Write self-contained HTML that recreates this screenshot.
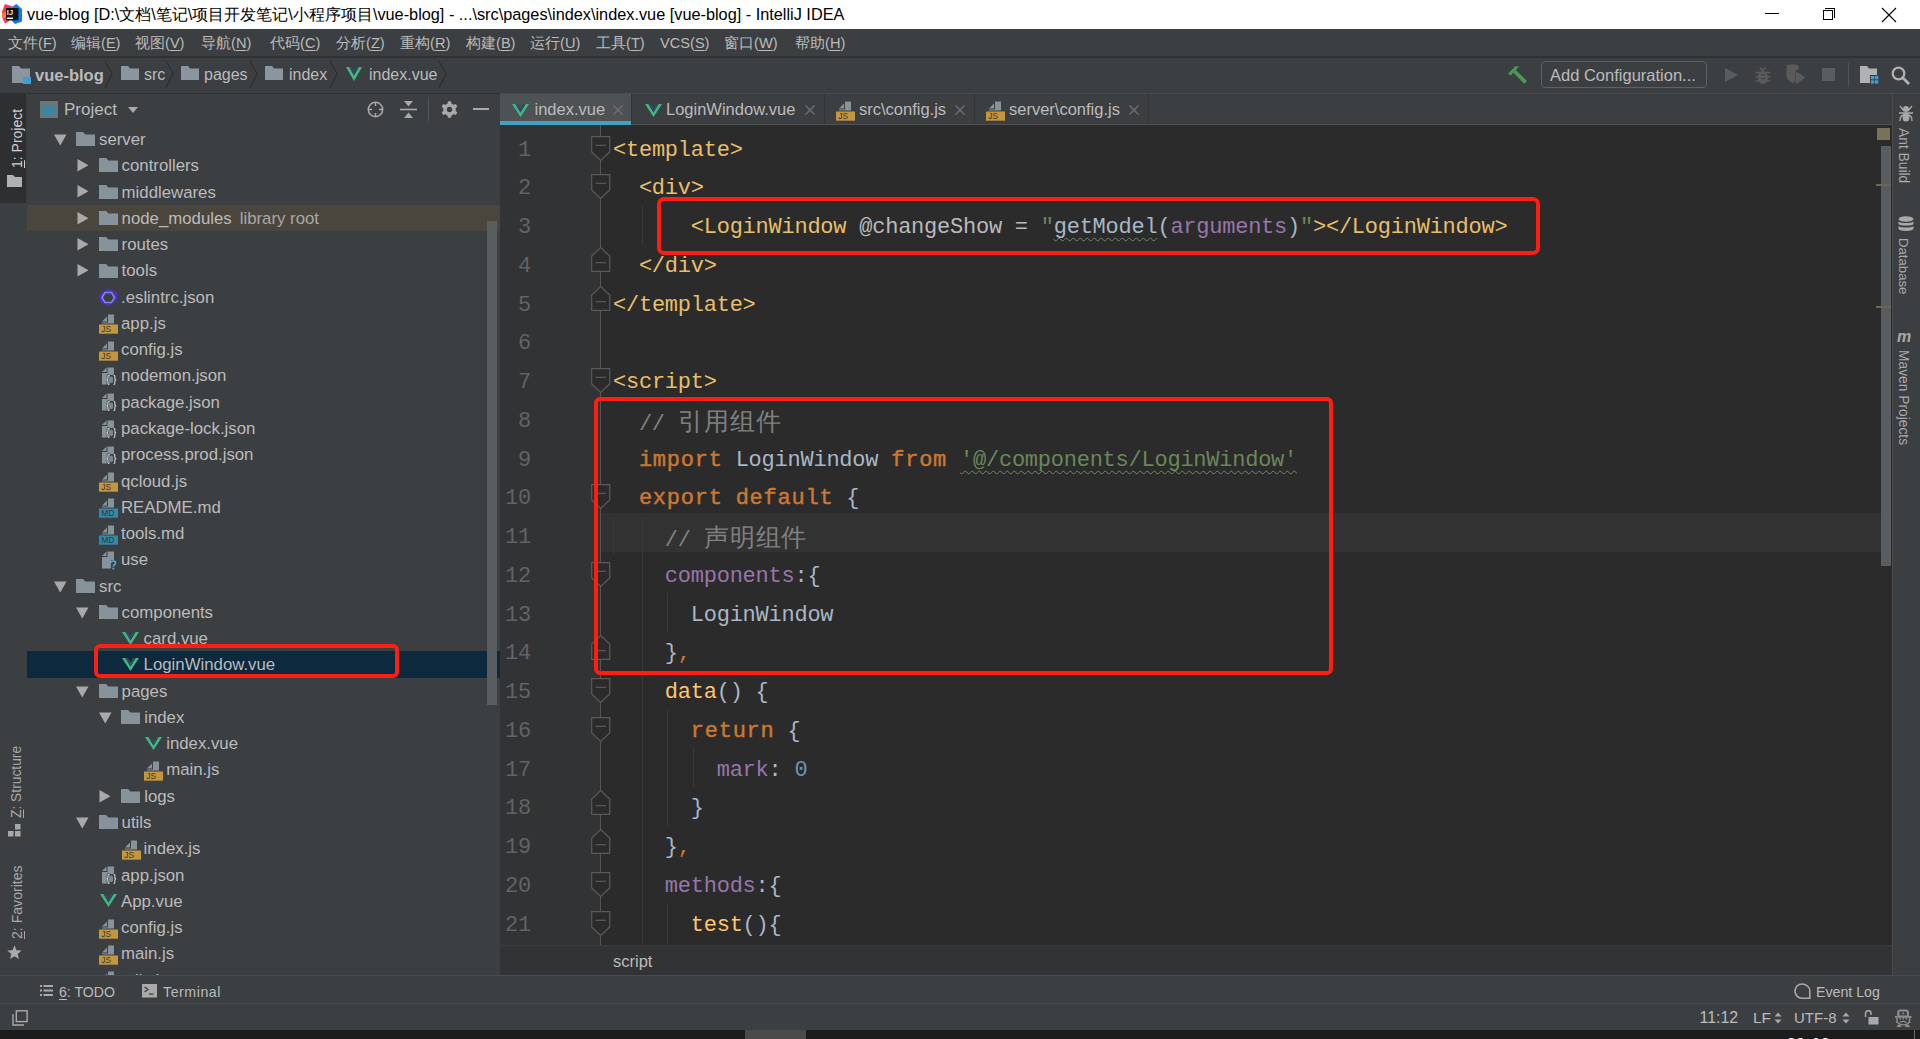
<!DOCTYPE html>
<html><head><meta charset="utf-8">
<style>
*{margin:0;padding:0;box-sizing:border-box}
html,body{width:1920px;height:1039px;overflow:hidden;background:#3C3F41;font-family:"Liberation Sans",sans-serif;color:#BBBBBB}
.a{position:absolute}
.t{position:absolute;white-space:pre;line-height:1}
#title{left:0;top:0;width:1920px;height:29px;background:#fff}
#menu{left:0;top:29px;width:1920px;height:28px;background:#3C3F41;border-bottom:1px solid #2F3133}
#nav{left:0;top:57px;width:1920px;height:37px;background:#3C3F41;border-bottom:1px solid #2F3133}
#lstrip{left:0;top:93px;width:27px;height:882px;background:#3C3F41;border-right:1px solid #474849}
#proj{left:26px;top:93px;width:474px;height:882px;background:#3C3F41}
#tabs{left:500px;top:93px;width:1393px;height:32px;background:#3C3F41;border-bottom:1px solid #515151}
#gutter{left:500px;top:125px;width:101px;height:820px;background:#313335}
#code{left:601px;top:125px;width:1291px;height:820px;background:#2B2B2B}
#rstrip{left:1892px;top:93px;width:28px;height:882px;background:#3C3F41;border-left:1px solid #4B4B4B}
#crumb{left:500px;top:945px;width:1392px;height:30px;background:#313335;border-top:1px solid #3A3A3A}
#tw{left:0;top:975px;width:1920px;height:28px;background:#3C3F41;border-top:1px solid #4A4B4C}
#status{left:0;top:1003px;width:1920px;height:27px;background:#3C3F41;border-top:1px solid #4A4B4C}
#task{left:0;top:1030px;width:1920px;height:9px;background:#1C1C1C}
.mi{top:6.5px;font-size:14.6px;color:#BBBBBB}
u{text-decoration:underline;text-underline-offset:2px}
.row{position:absolute;height:26px;font-size:17px;line-height:26px;white-space:pre;color:#BBBBBB}
.ln{font-family:"Liberation Mono",monospace;font-size:22px;color:#606366;letter-spacing:-0.24px}
.code{font-family:"Liberation Mono",monospace;font-size:22px;letter-spacing:-0.24px;color:#A9B7C6}
.tg{color:#E8BF6A}.kw{color:#CC7832}.st{color:#6A8759}.cm{color:#808080}.pu{color:#9876AA}.nu{color:#6897BB}.df{color:#A9B7C6}
</style></head><body>

<div id="title" class="a">
 <svg class="a" style="left:0;top:0" width="24" height="26" viewBox="0 0 24 26">
  <path d="M5 4L12.5 6.5V19L5 23.5L2 17V11.5Z" fill="#FE315D"/>
  <path d="M2 12.5H6V18H2.3Z" fill="#FC801D"/>
  <path d="M16.3 4L22 9V21.5L15 24L11.5 20.5L12.5 6.5Z" fill="#087CFA"/>
  <rect x="6" y="8" width="12.5" height="12.3" fill="#111"/>
  <text x="6.8" y="15" font-family="Liberation Sans" font-weight="bold" font-size="7.5" fill="#E8E8E8">IJ</text>
  <rect x="7" y="17.6" width="6" height="1.4" fill="#fff"/>
 </svg>
 <div class="t" style="left:27px;top:6px;font-size:16.3px;color:#000">vue-blog [D:\文档\笔记\项目开发笔记\小程序项目\vue-blog] - ...\src\pages\index\index.vue [vue-blog] - IntelliJ IDEA</div>
 <div class="a" style="left:1765px;top:13px;width:14px;height:1px;background:#000"></div>
 <div class="a" style="left:1823px;top:10px;width:10px;height:10px;border:1px solid #000"></div>
 <div class="a" style="left:1825px;top:8px;width:10px;height:10px;border-top:1px solid #000;border-right:1px solid #000"></div>
 <svg class="a" style="left:1881px;top:7px" width="16" height="16" viewBox="0 0 16 16"><path d="M1 1L15 15M15 1L1 15" stroke="#000" stroke-width="1.1"/></svg>
</div>

<div id="menu" class="a">
 <div class="t mi" style="left:8px">文件(<u>F</u>)</div>
 <div class="t mi" style="left:71px">编辑(<u>E</u>)</div>
 <div class="t mi" style="left:135px">视图(<u>V</u>)</div>
 <div class="t mi" style="left:201px">导航(<u>N</u>)</div>
 <div class="t mi" style="left:270px">代码(<u>C</u>)</div>
 <div class="t mi" style="left:336px">分析(<u>Z</u>)</div>
 <div class="t mi" style="left:400px">重构(<u>R</u>)</div>
 <div class="t mi" style="left:466px">构建(<u>B</u>)</div>
 <div class="t mi" style="left:530px">运行(<u>U</u>)</div>
 <div class="t mi" style="left:596px">工具(<u>T</u>)</div>
 <div class="t mi" style="left:660px">VCS(<u>S</u>)</div>
 <div class="t mi" style="left:724px">窗口(<u>W</u>)</div>
 <div class="t mi" style="left:795px">帮助(<u>H</u>)</div>
</div>

<div id="nav" class="a">
<svg class="a" style="left:12px;top:9px" width="20" height="18" viewBox="0 0 20 18"><path d="M0 0H7L9 2.5H18V11H11V17H0Z" fill="#8A959F"/><rect x="11" y="11" width="8" height="7" fill="#3D9FD8"/></svg><div class="t" style="left:35px;top:10.4px;font-size:16.5px;font-weight:bold;color:#BBBBBB">vue-blog</div><svg class="a" style="left:104px;top:4px" width="10" height="27" viewBox="0 0 10 27"><path d="M1 0L8.3 12.5L1 26.5" fill="none" stroke="#2A2C2D" stroke-width="1.1"/><path d="M2.2 0L9.5 12.5" fill="none" stroke="#45484A" stroke-width="0.7"/></svg><svg class="a" style="left:121px;top:9px" width="18" height="14" viewBox="0 0 18 14"><path d="M0 0H7L9 2.5H18V14H0Z" fill="#8A959F"/></svg><div class="t" style="left:144px;top:10.4px;font-size:16px">src</div><svg class="a" style="left:165px;top:4px" width="10" height="27" viewBox="0 0 10 27"><path d="M1 0L8.3 12.5L1 26.5" fill="none" stroke="#2A2C2D" stroke-width="1.1"/><path d="M2.2 0L9.5 12.5" fill="none" stroke="#45484A" stroke-width="0.7"/></svg><svg class="a" style="left:181px;top:9px" width="18" height="14" viewBox="0 0 18 14"><path d="M0 0H7L9 2.5H18V14H0Z" fill="#8A959F"/></svg><div class="t" style="left:204px;top:10.4px;font-size:16px">pages</div><svg class="a" style="left:249px;top:4px" width="10" height="27" viewBox="0 0 10 27"><path d="M1 0L8.3 12.5L1 26.5" fill="none" stroke="#2A2C2D" stroke-width="1.1"/><path d="M2.2 0L9.5 12.5" fill="none" stroke="#45484A" stroke-width="0.7"/></svg><svg class="a" style="left:265px;top:9px" width="18" height="14" viewBox="0 0 18 14"><path d="M0 0H7L9 2.5H18V14H0Z" fill="#8A959F"/></svg><div class="t" style="left:289px;top:10.4px;font-size:16px">index</div><svg class="a" style="left:329px;top:4px" width="10" height="27" viewBox="0 0 10 27"><path d="M1 0L8.3 12.5L1 26.5" fill="none" stroke="#2A2C2D" stroke-width="1.1"/><path d="M2.2 0L9.5 12.5" fill="none" stroke="#45484A" stroke-width="0.7"/></svg><svg class="a" style="left:346px;top:9.5px" width="16" height="14" viewBox="0 0 16 14"><path d="M0 0H3.2L8 8.6L12.8 0H16L8 14Z" fill="#41B883"/><path d="M3.2 0H5.6L8 4.3L10.4 0H12.8L8 8.6Z" fill="#35495E"/></svg><div class="t" style="left:369px;top:10.4px;font-size:16px">index.vue</div><svg class="a" style="left:438px;top:4px" width="10" height="27" viewBox="0 0 10 27"><path d="M1 0L8.3 12.5L1 26.5" fill="none" stroke="#2A2C2D" stroke-width="1.1"/><path d="M2.2 0L9.5 12.5" fill="none" stroke="#45484A" stroke-width="0.7"/></svg><svg class="a" style="left:1500px;top:3px" width="40" height="30" viewBox="0 0 40 30"><path d="M8.2 13.6L15.4 6.2H19.2L15.6 10.2L13.4 12.4L10.6 15.6Z" fill="#499C54"/><path d="M13.2 12.6L15.8 10L27 21L24.2 23.8Z" fill="#499C54"/></svg><div class="a" style="left:1541px;top:4px;width:166px;height:27px;border:1px solid #5E6162;border-radius:4px"></div><div class="t" style="left:1550px;top:10px;font-size:16.5px;color:#BBBBBB">Add Configuration...</div><svg class="a" style="left:1725px;top:11px" width="13" height="14" viewBox="0 0 13 14"><path d="M0 0L13 7L0 14Z" fill="#5A5D5F"/></svg><svg class="a" style="left:1745px;top:3px" width="30" height="30" viewBox="0 0 30 30"><ellipse cx="17.9" cy="17.5" rx="5" ry="6.6" fill="#5A5A5A"/><path d="M15 7.5L17.5 10.5L20.5 7.5" fill="none" stroke="#5A5A5A" stroke-width="1.6"/><path d="M10.5 12.5H25.5M10.5 16.8H25.5M10.5 21H25.5" stroke="#5A5A5A" stroke-width="1.6"/><path d="M16 14.7H20M16 18.5H20" stroke="#3C3F41" stroke-width="1.1"/></svg><svg class="a" style="left:1785px;top:3px" width="25" height="30" viewBox="0 0 25 30"><path d="M1.5 5.5L7.5 4L13.5 5.5V10H10.5V21.5L7.5 23L3 20C1.5 18.5 1.5 17 1.5 15Z" fill="#5A5A5A"/><path d="M11 11.3L20.5 17.5L11 24.2Z" fill="#5A5A5A"/></svg><div class="a" style="left:1822px;top:11px;width:13px;height:13px;background:#5A5D5F"></div><div class="a" style="left:1848px;top:6px;width:1px;height:24px;background:#515456"></div><svg class="a" style="left:1860px;top:9px" width="19" height="18" viewBox="0 0 19 18"><path d="M0 0H7L9 2.5H17V9H10V17H0Z" fill="#AFB1B3"/><rect x="11" y="10" width="3.3" height="3.3" fill="#3D9FD8"/><rect x="15" y="10" width="3.3" height="3.3" fill="#3D9FD8"/><rect x="11" y="14.3" width="3.3" height="3.3" fill="#3D9FD8"/><rect x="15" y="14.3" width="3.3" height="3.3" fill="#3D9FD8"/></svg><svg class="a" style="left:1891px;top:9px" width="20" height="19" viewBox="0 0 20 19"><circle cx="7.5" cy="7.5" r="5.8" fill="none" stroke="#AFB1B3" stroke-width="2.2"/><path d="M11.5 11.5L18 18" stroke="#AFB1B3" stroke-width="2.8"/></svg></div>

<div id="lstrip" class="a"></div>
<div id="proj" class="a"></div>
<div class="a" style="left:0;top:93px;width:26px;height:110px;background:#2D2F30"></div>
<div class="t" style="left:9.8px;top:168px;font-size:14px;color:#D0D0D0;transform:rotate(-90deg);transform-origin:0 0"><u>1</u>: Project</div>
<svg class="a" style="left:7px;top:175px" width="15" height="12" viewBox="0 0 15 12"><path d="M0 0H6L8 2H15V12H0Z" fill="#AFB1B3"/></svg>
<svg class="a" style="left:40px;top:101px" width="18" height="17" viewBox="0 0 18 17"><rect x="0" y="0" width="18" height="17" fill="#6E7375"/><rect x="2" y="4" width="14" height="11" fill="#3E86A0"/></svg>
<div class="t" style="left:64px;top:101px;font-size:17px;color:#BBBBBB">Project</div>
<svg class="a" style="left:128px;top:107px" width="10" height="6" viewBox="0 0 10 6"><path d="M0 0H10L5 6Z" fill="#A9A9A9"/></svg>
<svg class="a" style="left:366.5px;top:101px" width="17" height="17" viewBox="0 0 17 17"><circle cx="8.5" cy="8.5" r="7.2" fill="none" stroke="#A9A9A9" stroke-width="1.5"/><path d="M8.5 1.3V5M8.5 12V15.7M1.3 8.5H5M12 8.5H15.7" stroke="#A9A9A9" stroke-width="1.5"/></svg>
<svg class="a" style="left:400px;top:101px" width="17" height="17" viewBox="0 0 17 17"><path d="M0 8.5H17" stroke="#A9A9A9" stroke-width="1.6"/><path d="M4 0H13L8.5 5.5Z M4 17H13L8.5 11.5Z" fill="#A9A9A9"/></svg>
<div class="a" style="left:428px;top:97px;width:1px;height:24px;background:#515456"></div>
<svg class="a" style="left:440.5px;top:101px" width="17" height="17" viewBox="0 0 17 17"><g fill="#A9A9A9"><circle cx="8.5" cy="8.5" r="6.3"/><rect x="6.7" y="0.3" width="3.6" height="16.4" rx="0.8"/><rect x="6.7" y="0.3" width="3.6" height="16.4" rx="0.8" transform="rotate(60 8.5 8.5)"/><rect x="6.7" y="0.3" width="3.6" height="16.4" rx="0.8" transform="rotate(120 8.5 8.5)"/></g><circle cx="8.5" cy="8.5" r="2.7" fill="#3C3F41"/></svg>
<div class="a" style="left:473px;top:108px;width:16px;height:2px;background:#A9A9A9"></div>
<div class="a" style="left:27px;top:0;width:473px;height:975px;overflow:hidden">
<svg class="a" style="left:26.5px;top:133.9px" width="13" height="12" viewBox="0 0 13 12"><path d="M0 0.5H12.5L6.25 11.5Z" fill="#A9A9A9"/></svg>
<svg class="a" style="left:49.0px;top:132.1px" width="19" height="14" viewBox="0 0 19 14"><path d="M0 0H7L9.5 2.6H19V14H0Z" fill="#87939A"/></svg>
<div class="t" style="left:72.0px;top:132.00px;font-size:16.8px;color:#BBBBBB">server</div>
<svg class="a" style="left:49.6px;top:159.2px" width="12" height="13" viewBox="0 0 12 13"><path d="M0.5 0L11.5 6.25L0.5 12.5Z" fill="#A9A9A9"/></svg>
<svg class="a" style="left:71.6px;top:158.4px" width="19" height="14" viewBox="0 0 19 14"><path d="M0 0H7L9.5 2.6H19V14H0Z" fill="#87939A"/></svg>
<div class="t" style="left:94.6px;top:158.27px;font-size:16.8px;color:#BBBBBB">controllers</div>
<svg class="a" style="left:49.6px;top:185.4px" width="12" height="13" viewBox="0 0 12 13"><path d="M0.5 0L11.5 6.25L0.5 12.5Z" fill="#A9A9A9"/></svg>
<svg class="a" style="left:71.6px;top:184.6px" width="19" height="14" viewBox="0 0 19 14"><path d="M0 0H7L9.5 2.6H19V14H0Z" fill="#87939A"/></svg>
<div class="t" style="left:94.6px;top:184.54px;font-size:16.8px;color:#BBBBBB">middlewares</div>
<div class="a" style="left:0;top:204.71px;width:473px;height:26px;background:#4A463D"></div>
<svg class="a" style="left:49.6px;top:211.7px" width="12" height="13" viewBox="0 0 12 13"><path d="M0.5 0L11.5 6.25L0.5 12.5Z" fill="#A9A9A9"/></svg>
<svg class="a" style="left:71.6px;top:210.9px" width="19" height="14" viewBox="0 0 19 14"><path d="M0 0H7L9.5 2.6H19V14H0Z" fill="#87939A"/></svg>
<div class="t" style="left:94.6px;top:210.81px;font-size:16.8px;color:#BBBBBB">node_modules<span style="color:#A8A8A8;margin-left:8px">library root</span></div>
<svg class="a" style="left:49.6px;top:238.0px" width="12" height="13" viewBox="0 0 12 13"><path d="M0.5 0L11.5 6.25L0.5 12.5Z" fill="#A9A9A9"/></svg>
<svg class="a" style="left:71.6px;top:237.2px" width="19" height="14" viewBox="0 0 19 14"><path d="M0 0H7L9.5 2.6H19V14H0Z" fill="#87939A"/></svg>
<div class="t" style="left:94.6px;top:237.08px;font-size:16.8px;color:#BBBBBB">routes</div>
<svg class="a" style="left:49.6px;top:264.3px" width="12" height="13" viewBox="0 0 12 13"><path d="M0.5 0L11.5 6.25L0.5 12.5Z" fill="#A9A9A9"/></svg>
<svg class="a" style="left:71.6px;top:263.5px" width="19" height="14" viewBox="0 0 19 14"><path d="M0 0H7L9.5 2.6H19V14H0Z" fill="#87939A"/></svg>
<div class="t" style="left:94.6px;top:263.35px;font-size:16.8px;color:#BBBBBB">tools</div>
<svg class="a" style="left:72.0px;top:287.5px" width="19" height="19" viewBox="0 0 19 19"><path d="M10 0.5L17.5 4L18 12.5L8.5 18L1 13.5L0.5 6Z" fill="#4B32C3"/><path d="M6 4.5H12.5L15.5 9.5L12.5 14.5H6L3 9.5Z" fill="#3C3F41" stroke="#8080F2" stroke-width="1.6"/></svg>
<div class="t" style="left:94.0px;top:289.62px;font-size:16.8px;color:#BBBBBB">.eslintrc.json</div>
<svg class="a" style="left:72.0px;top:314.4px" width="19" height="20" viewBox="0 0 19 20"><path d="M3 7.5L8 2.5V7.5Z" fill="#87939A"/><path d="M9 0.5H15V9.5H3V8.5H9Z" fill="#87939A"/><rect x="0" y="10.5" width="19" height="9.2" fill="#C4963F"/><text x="2.2" y="18.4" font-family="Liberation Sans" font-size="8.4" fill="#3A3A30">JS</text></svg>
<div class="t" style="left:94.0px;top:315.89px;font-size:16.8px;color:#BBBBBB">app.js</div>
<svg class="a" style="left:72.0px;top:340.7px" width="19" height="20" viewBox="0 0 19 20"><path d="M3 7.5L8 2.5V7.5Z" fill="#87939A"/><path d="M9 0.5H15V9.5H3V8.5H9Z" fill="#87939A"/><rect x="0" y="10.5" width="19" height="9.2" fill="#C4963F"/><text x="2.2" y="18.4" font-family="Liberation Sans" font-size="8.4" fill="#3A3A30">JS</text></svg>
<div class="t" style="left:94.0px;top:342.16px;font-size:16.8px;color:#BBBBBB">config.js</div>
<svg class="a" style="left:72.0px;top:366.9px" width="19" height="20" viewBox="0 0 19 20"><path d="M3 5L7.5 0.5V5Z" fill="#87939A"/><path d="M8.5 0.5H15V8H11V17.5H3V6H8.5Z" fill="#87939A"/><path d="M10.2 8.2C8.6 8.2 9 9.6 9 11C9 12.2 8.6 12.8 7.6 12.8C8.6 12.8 9 13.4 9 14.6C9 16 8.6 17.6 10.2 17.6M14.6 8.2C16.2 8.2 15.8 9.6 15.8 11C15.8 12.2 16.2 12.8 17.2 12.8C16.2 12.8 15.8 13.4 15.8 14.6C15.8 16 16.2 17.6 14.6 17.6" fill="none" stroke="#3C3F41" stroke-width="2.6"/><ellipse cx="12.4" cy="12.9" rx="1.7" ry="3.3" fill="#7E878D"/><path d="M10.2 8.2C8.6 8.2 9 9.6 9 11C9 12.2 8.6 12.8 7.6 12.8C8.6 12.8 9 13.4 9 14.6C9 16 8.6 17.6 10.2 17.6M14.6 8.2C16.2 8.2 15.8 9.6 15.8 11C15.8 12.2 16.2 12.8 17.2 12.8C16.2 12.8 15.8 13.4 15.8 14.6C15.8 16 16.2 17.6 14.6 17.6" fill="none" stroke="#D8D8D8" stroke-width="1.1"/></svg>
<div class="t" style="left:94.0px;top:368.43px;font-size:16.8px;color:#BBBBBB">nodemon.json</div>
<svg class="a" style="left:72.0px;top:393.2px" width="19" height="20" viewBox="0 0 19 20"><path d="M3 5L7.5 0.5V5Z" fill="#87939A"/><path d="M8.5 0.5H15V8H11V17.5H3V6H8.5Z" fill="#87939A"/><path d="M10.2 8.2C8.6 8.2 9 9.6 9 11C9 12.2 8.6 12.8 7.6 12.8C8.6 12.8 9 13.4 9 14.6C9 16 8.6 17.6 10.2 17.6M14.6 8.2C16.2 8.2 15.8 9.6 15.8 11C15.8 12.2 16.2 12.8 17.2 12.8C16.2 12.8 15.8 13.4 15.8 14.6C15.8 16 16.2 17.6 14.6 17.6" fill="none" stroke="#3C3F41" stroke-width="2.6"/><ellipse cx="12.4" cy="12.9" rx="1.7" ry="3.3" fill="#7E878D"/><path d="M10.2 8.2C8.6 8.2 9 9.6 9 11C9 12.2 8.6 12.8 7.6 12.8C8.6 12.8 9 13.4 9 14.6C9 16 8.6 17.6 10.2 17.6M14.6 8.2C16.2 8.2 15.8 9.6 15.8 11C15.8 12.2 16.2 12.8 17.2 12.8C16.2 12.8 15.8 13.4 15.8 14.6C15.8 16 16.2 17.6 14.6 17.6" fill="none" stroke="#D8D8D8" stroke-width="1.1"/></svg>
<div class="t" style="left:94.0px;top:394.70px;font-size:16.8px;color:#BBBBBB">package.json</div>
<svg class="a" style="left:72.0px;top:419.5px" width="19" height="20" viewBox="0 0 19 20"><path d="M3 5L7.5 0.5V5Z" fill="#87939A"/><path d="M8.5 0.5H15V8H11V17.5H3V6H8.5Z" fill="#87939A"/><path d="M10.2 8.2C8.6 8.2 9 9.6 9 11C9 12.2 8.6 12.8 7.6 12.8C8.6 12.8 9 13.4 9 14.6C9 16 8.6 17.6 10.2 17.6M14.6 8.2C16.2 8.2 15.8 9.6 15.8 11C15.8 12.2 16.2 12.8 17.2 12.8C16.2 12.8 15.8 13.4 15.8 14.6C15.8 16 16.2 17.6 14.6 17.6" fill="none" stroke="#3C3F41" stroke-width="2.6"/><ellipse cx="12.4" cy="12.9" rx="1.7" ry="3.3" fill="#7E878D"/><path d="M10.2 8.2C8.6 8.2 9 9.6 9 11C9 12.2 8.6 12.8 7.6 12.8C8.6 12.8 9 13.4 9 14.6C9 16 8.6 17.6 10.2 17.6M14.6 8.2C16.2 8.2 15.8 9.6 15.8 11C15.8 12.2 16.2 12.8 17.2 12.8C16.2 12.8 15.8 13.4 15.8 14.6C15.8 16 16.2 17.6 14.6 17.6" fill="none" stroke="#D8D8D8" stroke-width="1.1"/></svg>
<div class="t" style="left:94.0px;top:420.97px;font-size:16.8px;color:#BBBBBB">package-lock.json</div>
<svg class="a" style="left:72.0px;top:445.7px" width="19" height="20" viewBox="0 0 19 20"><path d="M3 5L7.5 0.5V5Z" fill="#87939A"/><path d="M8.5 0.5H15V8H11V17.5H3V6H8.5Z" fill="#87939A"/><path d="M10.2 8.2C8.6 8.2 9 9.6 9 11C9 12.2 8.6 12.8 7.6 12.8C8.6 12.8 9 13.4 9 14.6C9 16 8.6 17.6 10.2 17.6M14.6 8.2C16.2 8.2 15.8 9.6 15.8 11C15.8 12.2 16.2 12.8 17.2 12.8C16.2 12.8 15.8 13.4 15.8 14.6C15.8 16 16.2 17.6 14.6 17.6" fill="none" stroke="#3C3F41" stroke-width="2.6"/><ellipse cx="12.4" cy="12.9" rx="1.7" ry="3.3" fill="#7E878D"/><path d="M10.2 8.2C8.6 8.2 9 9.6 9 11C9 12.2 8.6 12.8 7.6 12.8C8.6 12.8 9 13.4 9 14.6C9 16 8.6 17.6 10.2 17.6M14.6 8.2C16.2 8.2 15.8 9.6 15.8 11C15.8 12.2 16.2 12.8 17.2 12.8C16.2 12.8 15.8 13.4 15.8 14.6C15.8 16 16.2 17.6 14.6 17.6" fill="none" stroke="#D8D8D8" stroke-width="1.1"/></svg>
<div class="t" style="left:94.0px;top:447.24px;font-size:16.8px;color:#BBBBBB">process.prod.json</div>
<svg class="a" style="left:72.0px;top:472.0px" width="19" height="20" viewBox="0 0 19 20"><path d="M3 7.5L8 2.5V7.5Z" fill="#87939A"/><path d="M9 0.5H15V9.5H3V8.5H9Z" fill="#87939A"/><rect x="0" y="10.5" width="19" height="9.2" fill="#C4963F"/><text x="2.2" y="18.4" font-family="Liberation Sans" font-size="8.4" fill="#3A3A30">JS</text></svg>
<div class="t" style="left:94.0px;top:473.51px;font-size:16.8px;color:#BBBBBB">qcloud.js</div>
<svg class="a" style="left:72.0px;top:498.3px" width="19" height="20" viewBox="0 0 19 20"><path d="M3 7.5L8 2.5V7.5Z" fill="#87939A"/><path d="M9 0.5H15V9.5H3V8.5H9Z" fill="#87939A"/><rect x="0" y="10.5" width="19" height="9.2" fill="#3589A8"/><text x="2.2" y="18.4" font-family="Liberation Sans" font-size="8.4" fill="#233B48">MD</text></svg>
<div class="t" style="left:94.0px;top:499.78px;font-size:16.8px;color:#BBBBBB">README.md</div>
<svg class="a" style="left:72.0px;top:524.5px" width="19" height="20" viewBox="0 0 19 20"><path d="M3 7.5L8 2.5V7.5Z" fill="#87939A"/><path d="M9 0.5H15V9.5H3V8.5H9Z" fill="#87939A"/><rect x="0" y="10.5" width="19" height="9.2" fill="#3589A8"/><text x="2.2" y="18.4" font-family="Liberation Sans" font-size="8.4" fill="#233B48">MD</text></svg>
<div class="t" style="left:94.0px;top:526.05px;font-size:16.8px;color:#BBBBBB">tools.md</div>
<svg class="a" style="left:72.0px;top:550.8px" width="19" height="20" viewBox="0 0 19 20"><path d="M3 5L7.5 0.5V5Z" fill="#87939A"/><path d="M8.5 0.5H15V9H12V17.5H3V6H8.5Z" fill="#87939A"/><path d="M12.2 11.6C12.2 9.6 16.6 9.4 16.6 11.8C16.6 13.6 14.3 13.8 14.3 15.6" fill="none" stroke="#3FB5E8" stroke-width="1.6"/><rect x="13.4" y="16.6" width="1.8" height="1.8" fill="#3FB5E8"/></svg>
<div class="t" style="left:94.0px;top:552.32px;font-size:16.8px;color:#BBBBBB">use</div>
<svg class="a" style="left:26.5px;top:580.5px" width="13" height="12" viewBox="0 0 13 12"><path d="M0 0.5H12.5L6.25 11.5Z" fill="#A9A9A9"/></svg>
<svg class="a" style="left:49.0px;top:578.7px" width="19" height="14" viewBox="0 0 19 14"><path d="M0 0H7L9.5 2.6H19V14H0Z" fill="#87939A"/></svg>
<div class="t" style="left:72.0px;top:578.59px;font-size:16.8px;color:#BBBBBB">src</div>
<svg class="a" style="left:49.1px;top:606.8px" width="13" height="12" viewBox="0 0 13 12"><path d="M0 0.5H12.5L6.25 11.5Z" fill="#A9A9A9"/></svg>
<svg class="a" style="left:71.6px;top:605.0px" width="19" height="14" viewBox="0 0 19 14"><path d="M0 0H7L9.5 2.6H19V14H0Z" fill="#87939A"/></svg>
<div class="t" style="left:94.6px;top:604.86px;font-size:16.8px;color:#BBBBBB">components</div>
<svg class="a" style="left:95.1px;top:631.7px" width="17" height="13" viewBox="0 0 17 13"><path d="M0 0H3.4L8.5 8.4L13.6 0H17L8.5 13Z" fill="#41B883"/><path d="M3.4 0H6L8.5 4.2L11 0H13.6L8.5 8.4Z" fill="#35495E"/></svg>
<div class="t" style="left:116.6px;top:631.13px;font-size:16.8px;color:#BBBBBB">card.vue</div>
<div class="a" style="left:0;top:651.00px;width:473px;height:27px;background:#0D293E"></div>
<svg class="a" style="left:95.1px;top:658.0px" width="17" height="13" viewBox="0 0 17 13"><path d="M0 0H3.4L8.5 8.4L13.6 0H17L8.5 13Z" fill="#41B883"/><path d="M3.4 0H6L8.5 4.2L11 0H13.6L8.5 8.4Z" fill="#35495E"/></svg>
<div class="t" style="left:116.6px;top:657.40px;font-size:16.8px;color:#BBBBBB">LoginWindow.vue</div>
<svg class="a" style="left:49.1px;top:685.6px" width="13" height="12" viewBox="0 0 13 12"><path d="M0 0.5H12.5L6.25 11.5Z" fill="#A9A9A9"/></svg>
<svg class="a" style="left:71.6px;top:683.8px" width="19" height="14" viewBox="0 0 19 14"><path d="M0 0H7L9.5 2.6H19V14H0Z" fill="#87939A"/></svg>
<div class="t" style="left:94.6px;top:683.67px;font-size:16.8px;color:#BBBBBB">pages</div>
<svg class="a" style="left:71.7px;top:711.8px" width="13" height="12" viewBox="0 0 13 12"><path d="M0 0.5H12.5L6.25 11.5Z" fill="#A9A9A9"/></svg>
<svg class="a" style="left:94.2px;top:710.0px" width="19" height="14" viewBox="0 0 19 14"><path d="M0 0H7L9.5 2.6H19V14H0Z" fill="#87939A"/></svg>
<div class="t" style="left:117.2px;top:709.94px;font-size:16.8px;color:#BBBBBB">index</div>
<svg class="a" style="left:117.7px;top:736.8px" width="17" height="13" viewBox="0 0 17 13"><path d="M0 0H3.4L8.5 8.4L13.6 0H17L8.5 13Z" fill="#41B883"/><path d="M3.4 0H6L8.5 4.2L11 0H13.6L8.5 8.4Z" fill="#35495E"/></svg>
<div class="t" style="left:139.2px;top:736.21px;font-size:16.8px;color:#BBBBBB">index.vue</div>
<svg class="a" style="left:117.2px;top:761.0px" width="19" height="20" viewBox="0 0 19 20"><path d="M3 7.5L8 2.5V7.5Z" fill="#87939A"/><path d="M9 0.5H15V9.5H3V8.5H9Z" fill="#87939A"/><rect x="0" y="10.5" width="19" height="9.2" fill="#C4963F"/><text x="2.2" y="18.4" font-family="Liberation Sans" font-size="8.4" fill="#3A3A30">JS</text></svg>
<div class="t" style="left:139.2px;top:762.48px;font-size:16.8px;color:#BBBBBB">main.js</div>
<svg class="a" style="left:72.2px;top:789.6px" width="12" height="13" viewBox="0 0 12 13"><path d="M0.5 0L11.5 6.25L0.5 12.5Z" fill="#A9A9A9"/></svg>
<svg class="a" style="left:94.2px;top:788.9px" width="19" height="14" viewBox="0 0 19 14"><path d="M0 0H7L9.5 2.6H19V14H0Z" fill="#87939A"/></svg>
<div class="t" style="left:117.2px;top:788.75px;font-size:16.8px;color:#BBBBBB">logs</div>
<svg class="a" style="left:49.1px;top:816.9px" width="13" height="12" viewBox="0 0 13 12"><path d="M0 0.5H12.5L6.25 11.5Z" fill="#A9A9A9"/></svg>
<svg class="a" style="left:71.6px;top:815.1px" width="19" height="14" viewBox="0 0 19 14"><path d="M0 0H7L9.5 2.6H19V14H0Z" fill="#87939A"/></svg>
<div class="t" style="left:94.6px;top:815.02px;font-size:16.8px;color:#BBBBBB">utils</div>
<svg class="a" style="left:94.6px;top:839.8px" width="19" height="20" viewBox="0 0 19 20"><path d="M3 7.5L8 2.5V7.5Z" fill="#87939A"/><path d="M9 0.5H15V9.5H3V8.5H9Z" fill="#87939A"/><rect x="0" y="10.5" width="19" height="9.2" fill="#C4963F"/><text x="2.2" y="18.4" font-family="Liberation Sans" font-size="8.4" fill="#3A3A30">JS</text></svg>
<div class="t" style="left:116.6px;top:841.29px;font-size:16.8px;color:#BBBBBB">index.js</div>
<svg class="a" style="left:72.0px;top:866.1px" width="19" height="20" viewBox="0 0 19 20"><path d="M3 5L7.5 0.5V5Z" fill="#87939A"/><path d="M8.5 0.5H15V8H11V17.5H3V6H8.5Z" fill="#87939A"/><path d="M10.2 8.2C8.6 8.2 9 9.6 9 11C9 12.2 8.6 12.8 7.6 12.8C8.6 12.8 9 13.4 9 14.6C9 16 8.6 17.6 10.2 17.6M14.6 8.2C16.2 8.2 15.8 9.6 15.8 11C15.8 12.2 16.2 12.8 17.2 12.8C16.2 12.8 15.8 13.4 15.8 14.6C15.8 16 16.2 17.6 14.6 17.6" fill="none" stroke="#3C3F41" stroke-width="2.6"/><ellipse cx="12.4" cy="12.9" rx="1.7" ry="3.3" fill="#7E878D"/><path d="M10.2 8.2C8.6 8.2 9 9.6 9 11C9 12.2 8.6 12.8 7.6 12.8C8.6 12.8 9 13.4 9 14.6C9 16 8.6 17.6 10.2 17.6M14.6 8.2C16.2 8.2 15.8 9.6 15.8 11C15.8 12.2 16.2 12.8 17.2 12.8C16.2 12.8 15.8 13.4 15.8 14.6C15.8 16 16.2 17.6 14.6 17.6" fill="none" stroke="#D8D8D8" stroke-width="1.1"/></svg>
<div class="t" style="left:94.0px;top:867.56px;font-size:16.8px;color:#BBBBBB">app.json</div>
<svg class="a" style="left:72.5px;top:894.4px" width="17" height="13" viewBox="0 0 17 13"><path d="M0 0H3.4L8.5 8.4L13.6 0H17L8.5 13Z" fill="#41B883"/><path d="M3.4 0H6L8.5 4.2L11 0H13.6L8.5 8.4Z" fill="#35495E"/></svg>
<div class="t" style="left:94.0px;top:893.83px;font-size:16.8px;color:#BBBBBB">App.vue</div>
<svg class="a" style="left:72.0px;top:918.6px" width="19" height="20" viewBox="0 0 19 20"><path d="M3 7.5L8 2.5V7.5Z" fill="#87939A"/><path d="M9 0.5H15V9.5H3V8.5H9Z" fill="#87939A"/><rect x="0" y="10.5" width="19" height="9.2" fill="#C4963F"/><text x="2.2" y="18.4" font-family="Liberation Sans" font-size="8.4" fill="#3A3A30">JS</text></svg>
<div class="t" style="left:94.0px;top:920.10px;font-size:16.8px;color:#BBBBBB">config.js</div>
<svg class="a" style="left:72.0px;top:944.9px" width="19" height="20" viewBox="0 0 19 20"><path d="M3 7.5L8 2.5V7.5Z" fill="#87939A"/><path d="M9 0.5H15V9.5H3V8.5H9Z" fill="#87939A"/><rect x="0" y="10.5" width="19" height="9.2" fill="#C4963F"/><text x="2.2" y="18.4" font-family="Liberation Sans" font-size="8.4" fill="#3A3A30">JS</text></svg>
<div class="t" style="left:94.0px;top:946.37px;font-size:16.8px;color:#BBBBBB">main.js</div>
<svg class="a" style="left:72.0px;top:971.1px" width="19" height="20" viewBox="0 0 19 20"><path d="M3 7.5L8 2.5V7.5Z" fill="#87939A"/><path d="M9 0.5H15V9.5H3V8.5H9Z" fill="#87939A"/><rect x="0" y="10.5" width="19" height="9.2" fill="#C4963F"/><text x="2.2" y="18.4" font-family="Liberation Sans" font-size="8.4" fill="#3A3A30">JS</text></svg>
<div class="t" style="left:94.0px;top:972.64px;font-size:16.8px;color:#BBBBBB">utils.js</div>
</div>
<div class="a" style="left:487px;top:221px;width:10px;height:484px;background:#5A5D5F"></div>

<div id="tabs" class="a"></div>
<div id="gutter" class="a"></div>
<div id="code" class="a"></div>
<!--ED-->
<div class="a" style="left:601px;top:513.4px;width:1280px;height:38.5px;background:#323232"></div>
<div class="a" style="left:641.5px;top:205.5px;width:1px;height:38.8px;background:#393939"></div>
<div class="a" style="left:641.5px;top:515.6px;width:1px;height:429.4px;background:#393939"></div>
<div class="a" style="left:667.0px;top:593.1px;width:1px;height:38.8px;background:#393939"></div>
<div class="a" style="left:667.0px;top:709.4px;width:1px;height:116.3px;background:#393939"></div>
<div class="a" style="left:667.0px;top:903.2px;width:1px;height:41.8px;background:#393939"></div>
<div class="a" style="left:692.5px;top:748.2px;width:1px;height:38.8px;background:#393939"></div>
<div class="a" style="left:612.5px;top:515.6px;width:1px;height:38.8px;background:#393939"></div>
<div class="a" style="left:600px;top:125px;width:1px;height:820px;background:#555555"></div>
<svg class="a" style="left:591px;top:135.5px" width="20" height="26" viewBox="0 0 20 26"><path d="M0.7 0.7H18.7V16L9.7 24.5L0.7 16Z" fill="#2B2B2B" stroke="#5A5A5A" stroke-width="1.2"/><path d="M4.5 9.3H15" stroke="#5A5A5A" stroke-width="1.2"/></svg>
<svg class="a" style="left:591px;top:174.3px" width="20" height="26" viewBox="0 0 20 26"><path d="M0.7 0.7H18.7V16L9.7 24.5L0.7 16Z" fill="#2B2B2B" stroke="#5A5A5A" stroke-width="1.2"/><path d="M4.5 9.3H15" stroke="#5A5A5A" stroke-width="1.2"/></svg>
<svg class="a" style="left:591px;top:368.1px" width="20" height="26" viewBox="0 0 20 26"><path d="M0.7 0.7H18.7V16L9.7 24.5L0.7 16Z" fill="#2B2B2B" stroke="#5A5A5A" stroke-width="1.2"/><path d="M4.5 9.3H15" stroke="#5A5A5A" stroke-width="1.2"/></svg>
<svg class="a" style="left:591px;top:484.3px" width="20" height="26" viewBox="0 0 20 26"><path d="M0.7 0.7H18.7V16L9.7 24.5L0.7 16Z" fill="#2B2B2B" stroke="#5A5A5A" stroke-width="1.2"/><path d="M4.5 9.3H15" stroke="#5A5A5A" stroke-width="1.2"/></svg>
<svg class="a" style="left:591px;top:561.9px" width="20" height="26" viewBox="0 0 20 26"><path d="M0.7 0.7H18.7V16L9.7 24.5L0.7 16Z" fill="#2B2B2B" stroke="#5A5A5A" stroke-width="1.2"/><path d="M4.5 9.3H15" stroke="#5A5A5A" stroke-width="1.2"/></svg>
<svg class="a" style="left:591px;top:678.1px" width="20" height="26" viewBox="0 0 20 26"><path d="M0.7 0.7H18.7V16L9.7 24.5L0.7 16Z" fill="#2B2B2B" stroke="#5A5A5A" stroke-width="1.2"/><path d="M4.5 9.3H15" stroke="#5A5A5A" stroke-width="1.2"/></svg>
<svg class="a" style="left:591px;top:716.9px" width="20" height="26" viewBox="0 0 20 26"><path d="M0.7 0.7H18.7V16L9.7 24.5L0.7 16Z" fill="#2B2B2B" stroke="#5A5A5A" stroke-width="1.2"/><path d="M4.5 9.3H15" stroke="#5A5A5A" stroke-width="1.2"/></svg>
<svg class="a" style="left:591px;top:871.9px" width="20" height="26" viewBox="0 0 20 26"><path d="M0.7 0.7H18.7V16L9.7 24.5L0.7 16Z" fill="#2B2B2B" stroke="#5A5A5A" stroke-width="1.2"/><path d="M4.5 9.3H15" stroke="#5A5A5A" stroke-width="1.2"/></svg>
<svg class="a" style="left:591px;top:910.7px" width="20" height="26" viewBox="0 0 20 26"><path d="M0.7 0.7H18.7V16L9.7 24.5L0.7 16Z" fill="#2B2B2B" stroke="#5A5A5A" stroke-width="1.2"/><path d="M4.5 9.3H15" stroke="#5A5A5A" stroke-width="1.2"/></svg>
<svg class="a" style="left:591px;top:246.3px" width="20" height="26" viewBox="0 0 20 26"><path d="M0.7 25.3H18.7V10L9.7 1.5L0.7 10Z" fill="#2B2B2B" stroke="#5A5A5A" stroke-width="1.2"/><path d="M4.5 16.7H15" stroke="#5A5A5A" stroke-width="1.2"/></svg>
<svg class="a" style="left:591px;top:285.0px" width="20" height="26" viewBox="0 0 20 26"><path d="M0.7 25.3H18.7V10L9.7 1.5L0.7 10Z" fill="#2B2B2B" stroke="#5A5A5A" stroke-width="1.2"/><path d="M4.5 16.7H15" stroke="#5A5A5A" stroke-width="1.2"/></svg>
<svg class="a" style="left:591px;top:633.9px" width="20" height="26" viewBox="0 0 20 26"><path d="M0.7 25.3H18.7V10L9.7 1.5L0.7 10Z" fill="#2B2B2B" stroke="#5A5A5A" stroke-width="1.2"/><path d="M4.5 16.7H15" stroke="#5A5A5A" stroke-width="1.2"/></svg>
<svg class="a" style="left:591px;top:788.9px" width="20" height="26" viewBox="0 0 20 26"><path d="M0.7 25.3H18.7V10L9.7 1.5L0.7 10Z" fill="#2B2B2B" stroke="#5A5A5A" stroke-width="1.2"/><path d="M4.5 16.7H15" stroke="#5A5A5A" stroke-width="1.2"/></svg>
<svg class="a" style="left:591px;top:827.7px" width="20" height="26" viewBox="0 0 20 26"><path d="M0.7 25.3H18.7V10L9.7 1.5L0.7 10Z" fill="#2B2B2B" stroke="#5A5A5A" stroke-width="1.2"/><path d="M4.5 16.7H15" stroke="#5A5A5A" stroke-width="1.2"/></svg>
<div class="t ln" style="top:139.55px;right:1389px">1</div>
<div class="t code" style="left:613.00px;top:139.55px"><span style="color:#E8BF6A">&lt;template&gt;</span></div>
<div class="t ln" style="top:178.31px;right:1389px">2</div>
<div class="t code" style="left:638.92px;top:178.31px"><span style="color:#E8BF6A">&lt;div&gt;</span></div>
<div class="t ln" style="top:217.07px;right:1389px">3</div>
<div class="t code" style="left:690.76px;top:217.07px"><span style="color:#E8BF6A">&lt;LoginWindow</span><span style="color:#BABABA"> @changeShow = </span><span style="color:#6A8759">"</span><span style="color:#A9B7C6;text-decoration:underline wavy #6E8A62;text-decoration-thickness:1px;text-underline-offset:4px;text-decoration-skip-ink:none">getModel</span><span style="color:#A9B7C6">(</span><span style="color:#9876AA">arguments</span><span style="color:#A9B7C6">)</span><span style="color:#6A8759">"</span><span style="color:#E8BF6A">&gt;&lt;/LoginWindow&gt;</span></div>
<div class="t ln" style="top:255.83px;right:1389px">4</div>
<div class="t code" style="left:638.92px;top:255.83px"><span style="color:#E8BF6A">&lt;/div&gt;</span></div>
<div class="t ln" style="top:294.59px;right:1389px">5</div>
<div class="t code" style="left:613.00px;top:294.59px"><span style="color:#E8BF6A">&lt;/template&gt;</span></div>
<div class="t ln" style="top:333.35px;right:1389px">6</div>
<div class="t ln" style="top:372.11px;right:1389px">7</div>
<div class="t code" style="left:613.00px;top:372.11px"><span style="color:#E8BF6A">&lt;script&gt;</span></div>
<div class="t ln" style="top:410.87px;right:1389px">8</div>
<div class="t code" style="left:638.92px;top:410.87px"><span style="color:#808080">// </span><span style="color:#808080;font-size:25px;letter-spacing:0.92px">引用组件</span></div>
<div class="t ln" style="top:449.63px;right:1389px">9</div>
<div class="t code" style="left:638.92px;top:449.63px"><span style="color:#CC7832;-webkit-text-stroke:0.45px #CC7832;letter-spacing:0.76px">import</span><span style="color:#A9B7C6"> LoginWindow </span><span style="color:#CC7832;-webkit-text-stroke:0.45px #CC7832;letter-spacing:0.76px">from</span><span style="color:#A9B7C6"> </span><span style="color:#6A8759;text-decoration:underline wavy #6E8A62;text-decoration-thickness:1px;text-underline-offset:4px;text-decoration-skip-ink:none">'@/components/LoginWindow'</span></div>
<div class="t ln" style="top:488.39px;right:1389px">10</div>
<div class="t code" style="left:638.92px;top:488.39px"><span style="color:#CC7832;-webkit-text-stroke:0.45px #CC7832;letter-spacing:0.76px">export</span><span style="color:#A9B7C6"> </span><span style="color:#CC7832;-webkit-text-stroke:0.45px #CC7832;letter-spacing:0.76px">default</span><span style="color:#A9B7C6"> {</span></div>
<div class="t ln" style="top:527.15px;right:1389px">11</div>
<div class="t code" style="left:664.84px;top:527.15px"><span style="color:#808080">// </span><span style="color:#808080;font-size:25px;letter-spacing:0.92px">声明组件</span></div>
<div class="t ln" style="top:565.91px;right:1389px">12</div>
<div class="t code" style="left:664.84px;top:565.91px"><span style="color:#9876AA">components</span><span style="color:#A9B7C6">:{</span></div>
<div class="t ln" style="top:604.67px;right:1389px">13</div>
<div class="t code" style="left:690.76px;top:604.67px"><span style="color:#A9B7C6">LoginWindow</span></div>
<div class="t ln" style="top:643.43px;right:1389px">14</div>
<div class="t code" style="left:664.84px;top:643.43px"><span style="color:#A9B7C6">}</span><span style="color:#CC7832">,</span></div>
<div class="t ln" style="top:682.19px;right:1389px">15</div>
<div class="t code" style="left:664.84px;top:682.19px"><span style="color:#FFC66D">data</span><span style="color:#A9B7C6">() {</span></div>
<div class="t ln" style="top:720.95px;right:1389px">16</div>
<div class="t code" style="left:690.76px;top:720.95px"><span style="color:#CC7832;-webkit-text-stroke:0.45px #CC7832;letter-spacing:0.76px">return</span><span style="color:#A9B7C6"> {</span></div>
<div class="t ln" style="top:759.71px;right:1389px">17</div>
<div class="t code" style="left:716.68px;top:759.71px"><span style="color:#9876AA">mark</span><span style="color:#A9B7C6">: </span><span style="color:#6897BB">0</span></div>
<div class="t ln" style="top:798.47px;right:1389px">18</div>
<div class="t code" style="left:690.76px;top:798.47px"><span style="color:#A9B7C6">}</span></div>
<div class="t ln" style="top:837.23px;right:1389px">19</div>
<div class="t code" style="left:664.84px;top:837.23px"><span style="color:#A9B7C6">}</span><span style="color:#CC7832">,</span></div>
<div class="t ln" style="top:875.99px;right:1389px">20</div>
<div class="t code" style="left:664.84px;top:875.99px"><span style="color:#9876AA">methods</span><span style="color:#A9B7C6">:{</span></div>
<div class="t ln" style="top:914.75px;right:1389px">21</div>
<div class="t code" style="left:690.76px;top:914.75px"><span style="color:#FFC66D">test</span><span style="color:#A9B7C6">(){</span></div>
<div class="a" style="left:656.5px;top:196.5px;width:883px;height:58.5px;border:4.2px solid #FE1E12;border-radius:7px"></div>
<div class="a" style="left:593.5px;top:396.5px;width:739px;height:278px;border:4.2px solid #FE1E12;border-radius:6px"></div>
<div class="a" style="left:1877px;top:128px;width:13px;height:12px;background:#787259"></div>
<div class="a" style="left:1881px;top:146px;width:10px;height:420px;background:#5A5D5F"></div>
<div class="a" style="left:1876px;top:184px;width:15px;height:2px;background:#6B6650"></div>
<div class="a" style="left:1876px;top:306px;width:15px;height:2px;background:#6B6650"></div>
<!--/ED-->
<div id="rstrip" class="a"></div>
<div id="crumb" class="a"></div>
<div id="tw" class="a"></div>
<div id="status" class="a"></div>
<div id="task" class="a"></div>
<!--MISC-->
<div class="a" style="left:500px;top:94px;width:131px;height:31px;background:#4E5254"></div>
<div class="a" style="left:500px;top:121px;width:131px;height:4px;background:#41A2C2"></div>
<div class="a" style="left:631px;top:94px;width:1px;height:30px;background:#323435"></div>
<div class="a" style="left:824px;top:94px;width:1px;height:30px;background:#323435"></div>
<div class="a" style="left:974px;top:94px;width:1px;height:30px;background:#323435"></div>
<div class="a" style="left:1148px;top:94px;width:1px;height:30px;background:#323435"></div>
<svg class="a" style="left:512px;top:103.5px" width="17" height="13" viewBox="0 0 17 13"><path d="M0 0H3.4L8.5 8.4L13.6 0H17L8.5 13Z" fill="#41B883"/><path d="M3.4 0H6L8.5 4.2L11 0H13.6L8.5 8.4Z" fill="#35495E"/></svg>
<div class="t" style="left:534.5px;top:101px;font-size:16.5px;color:#BBBBBB">index.vue</div>
<svg class="a" style="left:613px;top:105px" width="10" height="10" viewBox="0 0 10 10"><path d="M0.5 0.5L9.5 9.5M9.5 0.5L0.5 9.5" stroke="#6E7072" stroke-width="1.3"/></svg>
<svg class="a" style="left:645px;top:103.5px" width="17" height="13" viewBox="0 0 17 13"><path d="M0 0H3.4L8.5 8.4L13.6 0H17L8.5 13Z" fill="#41B883"/><path d="M3.4 0H6L8.5 4.2L11 0H13.6L8.5 8.4Z" fill="#35495E"/></svg>
<div class="t" style="left:666px;top:101px;font-size:16.5px;color:#BBBBBB">LoginWindow.vue</div>
<svg class="a" style="left:805px;top:105px" width="10" height="10" viewBox="0 0 10 10"><path d="M0.5 0.5L9.5 9.5M9.5 0.5L0.5 9.5" stroke="#6E7072" stroke-width="1.3"/></svg>
<svg class="a" style="left:836px;top:101px" width="19" height="20" viewBox="0 0 19 20"><path d="M3 7.5L8 2.5V7.5Z" fill="#87939A"/><path d="M9 0.5H15V9.5H3V8.5H9Z" fill="#87939A"/><rect x="0" y="10.5" width="19" height="9.2" fill="#C4963F"/><text x="2.2" y="18.4" font-family="Liberation Sans" font-size="8.4" fill="#3A3A30">JS</text></svg>
<div class="t" style="left:859px;top:101px;font-size:16.5px;color:#BBBBBB">src\config.js</div>
<svg class="a" style="left:955px;top:105px" width="10" height="10" viewBox="0 0 10 10"><path d="M0.5 0.5L9.5 9.5M9.5 0.5L0.5 9.5" stroke="#6E7072" stroke-width="1.3"/></svg>
<svg class="a" style="left:986px;top:101px" width="19" height="20" viewBox="0 0 19 20"><path d="M3 7.5L8 2.5V7.5Z" fill="#87939A"/><path d="M9 0.5H15V9.5H3V8.5H9Z" fill="#87939A"/><rect x="0" y="10.5" width="19" height="9.2" fill="#C4963F"/><text x="2.2" y="18.4" font-family="Liberation Sans" font-size="8.4" fill="#3A3A30">JS</text></svg>
<div class="t" style="left:1009px;top:101px;font-size:16.5px;color:#BBBBBB">server\config.js</div>
<svg class="a" style="left:1129px;top:105px" width="10" height="10" viewBox="0 0 10 10"><path d="M0.5 0.5L9.5 9.5M9.5 0.5L0.5 9.5" stroke="#6E7072" stroke-width="1.3"/></svg>
<div class="t" style="left:9.5px;top:818px;font-size:13.8px;color:#A9A9A9;transform:rotate(-90deg);transform-origin:0 0"><u>Z</u>: Structure</div>
<svg class="a" style="left:8px;top:824px" width="13" height="13" viewBox="0 0 13 13"><rect x="7" y="0" width="5.5" height="5.5" fill="#A9A9A9"/><rect x="0" y="7" width="5.5" height="5.5" fill="#A9A9A9"/><rect x="7" y="7" width="5.5" height="5.5" fill="#A9A9A9"/></svg>
<div class="t" style="left:9.5px;top:939px;font-size:14.1px;color:#A9A9A9;transform:rotate(-90deg);transform-origin:0 0"><u>2</u>: Favorites</div>
<svg class="a" style="left:7px;top:945px" width="15" height="15" viewBox="0 0 24 24"><path d="M12 0.5L15.2 8.3L23.5 8.9L17.1 14.3L19.1 22.5L12 18L4.9 22.5L6.9 14.3L0.5 8.9L8.8 8.3Z" fill="#A9A9A9"/></svg>
<svg class="a" style="left:1898px;top:105px" width="16" height="17" viewBox="0 0 16 17"><g fill="#A9A9A9"><circle cx="8" cy="4" r="3"/><ellipse cx="8" cy="12" rx="3.5" ry="4.5"/></g><path d="M2 1L6 6M14 1L10 6M1 8H15M2 16C2 12 4 10 6 10M14 16C14 12 12 10 10 10" fill="none" stroke="#A9A9A9" stroke-width="1.3"/></svg>
<div class="t" style="left:1910.2px;top:127.5px;font-size:13.8px;color:#A9A9A9;transform:rotate(90deg);transform-origin:0 0">Ant Build</div>
<svg class="a" style="left:1898px;top:216px" width="16" height="16" viewBox="0 0 16 16"><g fill="#A9A9A9"><ellipse cx="8" cy="3" rx="7.5" ry="2.8"/><path d="M0.5 5.5C2 7.5 14 7.5 15.5 5.5V8C14 10 2 10 0.5 8Z"/><path d="M0.5 10C2 12 14 12 15.5 10V13C14 15.5 2 15.5 0.5 13Z"/></g></svg>
<div class="t" style="left:1910.2px;top:238px;font-size:13.2px;color:#A9A9A9;transform:rotate(90deg);transform-origin:0 0">Database</div>
<div class="t" style="left:1897px;top:329px;font-size:16px;font-weight:bold;font-style:italic;color:#A9A9A9">m</div>
<div class="t" style="left:1910.2px;top:349.5px;font-size:13.8px;color:#A9A9A9;transform:rotate(90deg);transform-origin:0 0">Maven Projects</div>
<div class="t" style="left:613px;top:953px;font-size:16.5px;color:#BBBBBB">script</div>
<svg class="a" style="left:40px;top:985px" width="13" height="11" viewBox="0 0 13 11"><g fill="#A9A9A9"><rect x="0" y="0" width="2" height="2"/><rect x="3.5" y="0" width="9.5" height="2"/><rect x="0" y="4.5" width="2" height="2"/><rect x="3.5" y="4.5" width="9.5" height="2"/><rect x="0" y="9" width="2" height="2"/><rect x="3.5" y="9" width="9.5" height="2"/></g></svg>
<div class="t" style="left:59px;top:985px;font-size:14.1px;color:#BBBBBB"><u>6</u>: TODO</div>
<svg class="a" style="left:142px;top:983.5px" width="15" height="14" viewBox="0 0 15 14"><rect width="15" height="13.5" fill="#A9A9A9"/><path d="M2.5 3L6 5.5L2.5 8" fill="none" stroke="#3C3F41" stroke-width="1.3"/><path d="M7 10H11.5" stroke="#3C3F41" stroke-width="1.3"/></svg>
<div class="t" style="left:163px;top:985px;font-size:14.2px;letter-spacing:0.55px;color:#BBBBBB">Terminal</div>
<svg class="a" style="left:1794px;top:983px" width="17" height="16" viewBox="0 0 17 16"><path d="M15.8 15.2H8C4 15.2 1 12 1 8C1 4 4 1 8 1C12 1 15.8 4 15.8 8Z" fill="none" stroke="#A9A9A9" stroke-width="1.6"/></svg>
<div class="t" style="left:1816px;top:985px;font-size:14.2px;color:#BBBBBB">Event Log</div>
<svg class="a" style="left:12px;top:1010px" width="16" height="16" viewBox="0 0 16 16"><rect x="4.3" y="0.8" width="10.8" height="10.8" fill="none" stroke="#A9A9A9" stroke-width="1.4"/><path d="M1 4V15H12" fill="none" stroke="#A9A9A9" stroke-width="1.4"/></svg>
<div class="t" style="left:1699.5px;top:1010px;font-size:15.9px;color:#BBBBBB">11:12</div>
<div class="t" style="left:1753px;top:1010px;font-size:15.5px;color:#BBBBBB">LF</div>
<svg class="a" style="left:1774px;top:1012px" width="8" height="12" viewBox="0 0 8 12"><path d="M0.5 4.5L4 0.5L7.5 4.5ZM0.5 7.5L4 11.5L7.5 7.5Z" fill="#A9A9A9"/></svg>
<div class="t" style="left:1794px;top:1010px;font-size:15px;color:#BBBBBB">UTF-8</div>
<svg class="a" style="left:1842px;top:1012px" width="8" height="12" viewBox="0 0 8 12"><path d="M0.5 4.5L4 0.5L7.5 4.5ZM0.5 7.5L4 11.5L7.5 7.5Z" fill="#A9A9A9"/></svg>
<svg class="a" style="left:1864px;top:1010px" width="15" height="15" viewBox="0 0 15 15"><path d="M1.5 7V3.5C1.5 1.5 3 0.7 4.3 0.7C5.6 0.7 7 1.5 7 3.5V5" fill="none" stroke="#A9A9A9" stroke-width="1.5"/><rect x="4.5" y="7" width="10" height="7.5" fill="#A9A9A9"/></svg>
<svg class="a" style="left:1895px;top:1008.5px" width="17" height="19" viewBox="0 0 17 19"><g fill="#8E8E8E"><path d="M2.2 8V3C2.2 1.2 3.4 0.4 5 0.4H11C12.6 0.4 13.9 1.2 13.9 3V8Z"/><rect x="0" y="7" width="16.5" height="1.8"/><rect x="1.2" y="9" width="1.5" height="5"/><rect x="13.8" y="9" width="1.5" height="5"/><rect x="4.5" y="9" width="1.3" height="1.5"/><rect x="7.6" y="9" width="1.3" height="1.5"/><rect x="10.7" y="9" width="1.3" height="1.5"/><path d="M1.5 18H6.5L5.5 15.5H3Z"/><path d="M10 18H15L13.5 15.5H11Z"/></g><rect x="4.4" y="2.5" width="7.5" height="4" fill="#3C3F41"/><rect x="7.4" y="3.7" width="1.6" height="1.6" fill="#8E8E8E"/><path d="M2.5 13C3.5 15 5 15.8 8.2 15.8C11.4 15.8 13 15 14 13M5.2 13.6C6 12 10.5 12 11.3 13.6" fill="none" stroke="#8E8E8E" stroke-width="1.3"/></svg>
<div class="a" style="left:745px;top:1030px;width:61px;height:9px;background:#4A4A4A"></div>
<div class="a" style="left:94px;top:643.5px;width:305px;height:34.5px;border:4px solid #FE1E12;border-radius:6px"></div>
<div class="a" style="left:500px;top:93px;width:1420px;height:1px;background:#4B4B4B"></div>
<div class="a" style="left:27px;top:93px;width:473px;height:1px;background:#2F3133"></div>
<div class="t" style="left:1787px;top:1034.5px;font-size:15px;font-weight:bold;color:#FFFFFF;letter-spacing:1px">20:16</div>
<div class="a" style="left:1914px;top:1030px;width:1px;height:9px;background:#6A6A6A"></div>
<div class="a" style="left:0;top:57px;width:1920px;height:1px;background:#2F3133"></div>
<!--/MISC-->
</body></html>
